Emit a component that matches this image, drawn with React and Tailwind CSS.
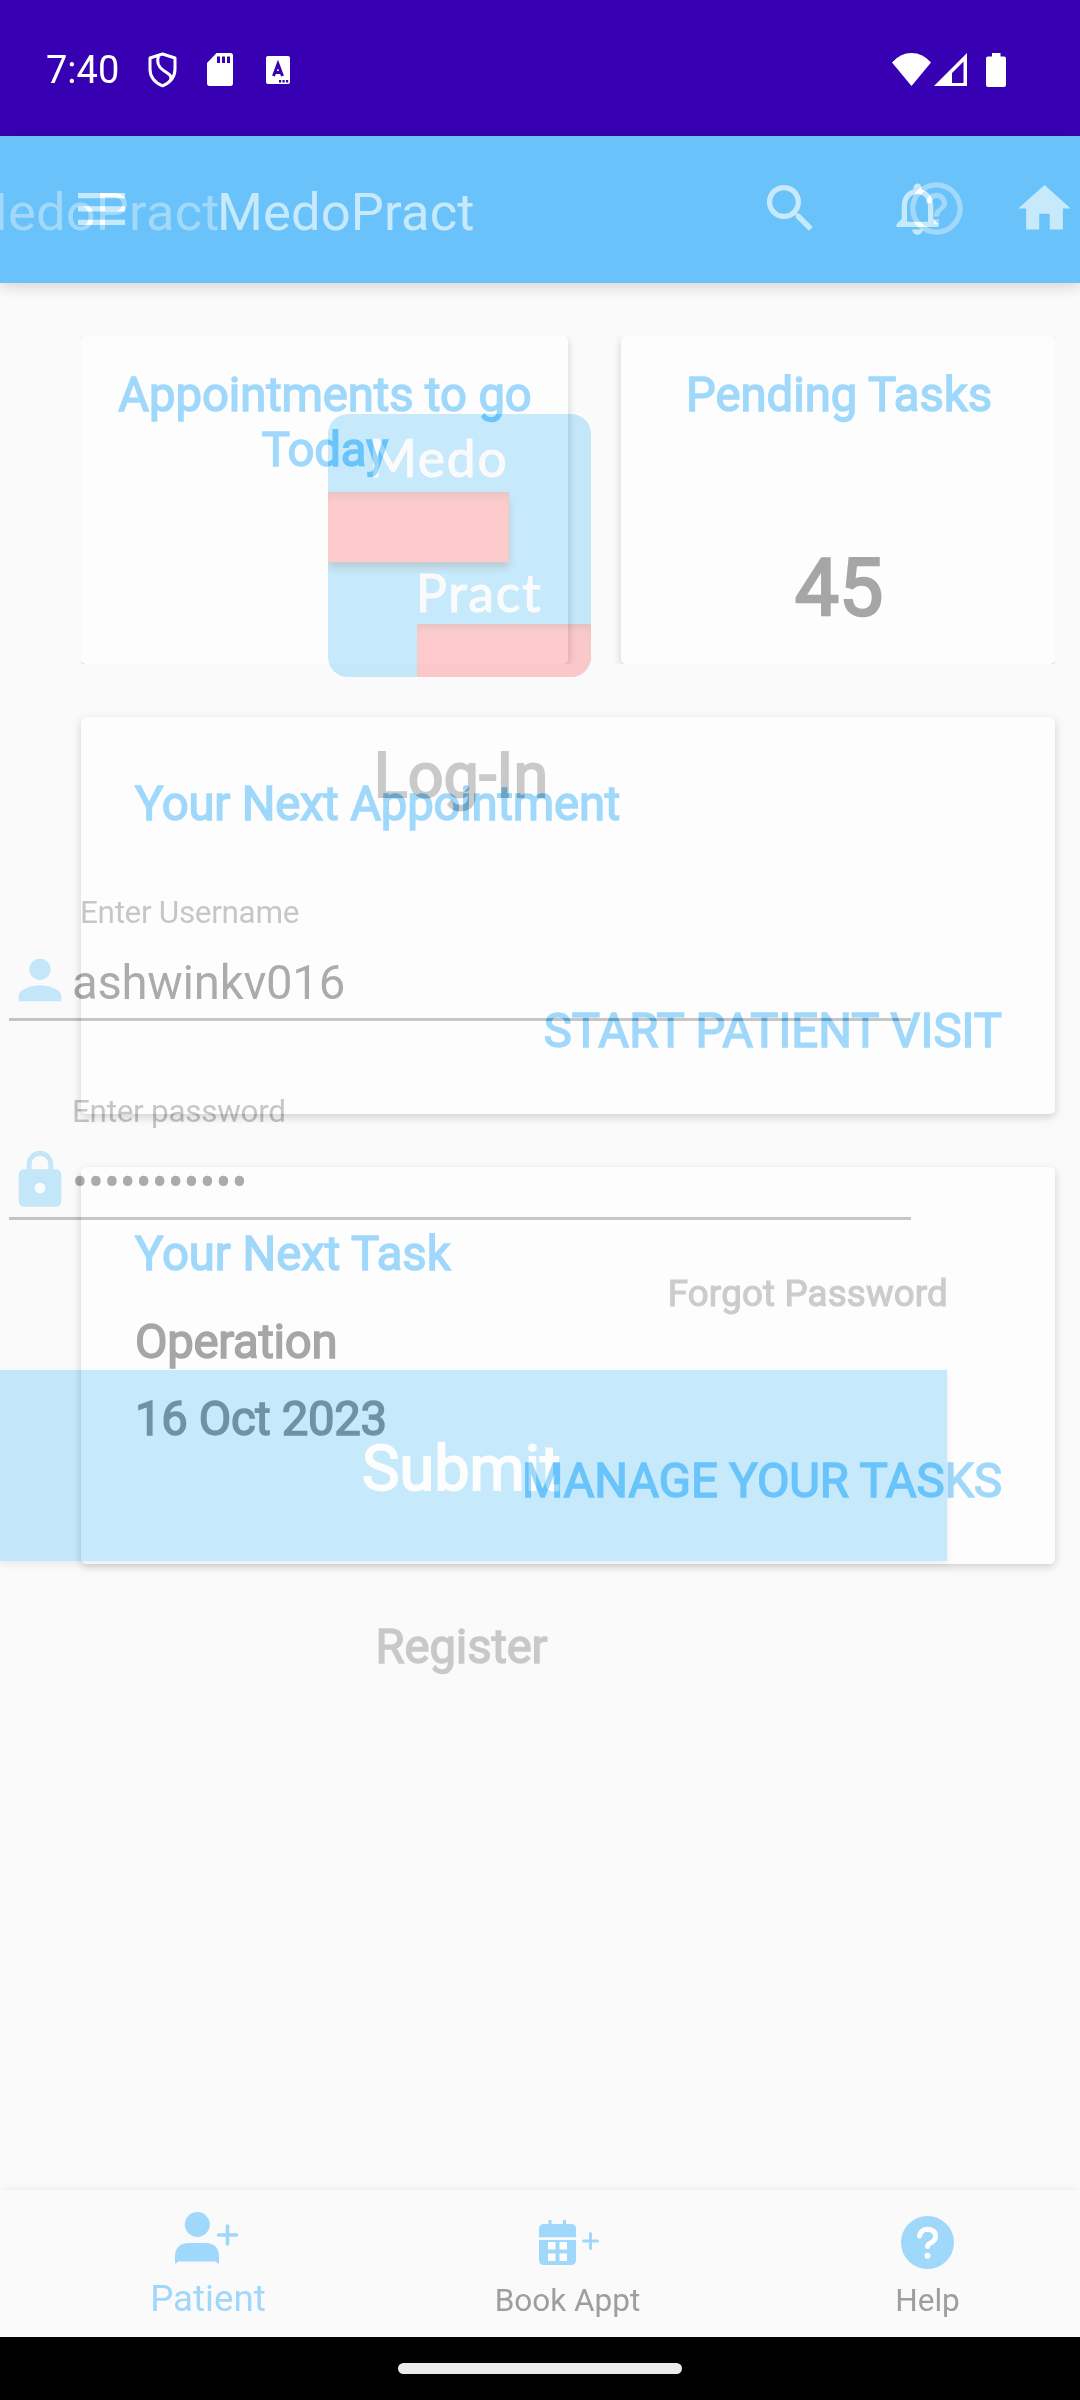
import React from "react";
import {
  MdSearch,
  MdNotificationsNone,
  MdHome,
  MdHelpOutline,
  MdPerson,
  MdLock,
} from "react-icons/md";

function StatusBar() {
  return (
    <div className="flex h-[136px] shrink-0 items-center bg-[#3700b3] pl-[46px] pt-[3px] text-white">
      <span className="w-[102px] text-[38px] leading-[44px]">7:40</span>
      <svg className="h-[36px] w-[30px]" viewBox="0 0 30 36" fill="none" stroke="#fff">
        <path d="M14.500 2 L27 6 V17 C27 24.500 22.500 30.500 14.500 33.800 C6.500 30.500 2 24.500 2 17 V6 Z" strokeWidth="3" strokeLinejoin="round" />
        <path d="M10.500 4 C8 11 10.500 15 15.500 18.500 C22 22.500 24 24 22.500 28" strokeWidth="3" />
      </svg>
      <svg className="ml-[29px] h-[33px] w-[26px]" viewBox="0 0 26 33">
        <path d="M9.500 0 H23.500 Q26 0 26 2.500 V30 Q26 33 23.500 33 H2.500 Q0 33 0 30 V10 Z" fill="#fff" />
        <path d="M10 3.500h3v6.500h-3zM15 3.500h3v6.500h-3zM20 3.500h3v6.500h-3z" fill="#3700b3" />
      </svg>
      <svg className="ml-[33px] h-[28px] w-[24px]" viewBox="0 0 24 28">
        <rect width="24" height="28" rx="2" fill="#fff" />
        <path d="M7.500 20 L12 8 L16.500 20 M9 16.500 H15" stroke="#3700b3" strokeWidth="3" fill="none" />
        <path d="M13 24h2.200v2.500h-2.200zM16.500 24h2.200v2.500h-2.200zM20 24h2.200v2.500h-2.200z" fill="#3700b3" />
      </svg>
      <svg className="ml-auto h-[33px] w-[39px]" viewBox="0 0 39 33">
        <path d="M0 9.500 Q8 0 19.500 0 Q31 0 39 9.500 L19.500 33 Z" fill="#fff" />
      </svg>
      <svg className="ml-[3px] h-[33px] w-[33px]" viewBox="0 0 33 33">
        <path fillRule="evenodd" d="M0 33 L33 0 V33 Z M18 20 V30 H29.500 V8.500 Z" fill="#fff" />
      </svg>
      <svg className="ml-[19px] mr-[74px] h-[34px] w-[20px]" viewBox="0 0 20 34">
        <path d="M6 0h8.500v3.500H18q2 0 2 2V32q0 2-2 2H2q-2 0-2-2V5.500q0-2 2-2h4z" fill="#fff" />
      </svg>
    </div>
  );
}

function AppBar() {
  return (
    <header className="flex h-[147px] shrink-0 items-center bg-[#69c3fa] pl-[78px] text-[#c6e9fc] shadow-[0_3px_14px_rgba(0,0,0,0.16)]">
      <svg className="-mt-[2px] h-[32px] w-[47px]" viewBox="0 0 47 32">
        <path d="M0 0h47v5.300H0zM0 13.300h47v5.300H0zM0 26.700h47v5.300H0z" fill="currentColor" />
      </svg>
      <h1 className="ml-[92px] mt-[5px] text-[52.5px] leading-[62px] tracking-[0.15px]">MedoPract</h1>
      <div className="-mt-[2px] ml-auto mr-[4px] flex gap-[64px]">
        <MdSearch size={63} />
        <MdNotificationsNone size={63} />
        <MdHome size={63} />
      </div>
    </header>
  );
}

const shadow = "shadow-[0_3px_8px_rgba(0,0,0,0.17)]";
const bold = "text-[47.25px] leading-[55px] [-webkit-text-stroke:1.5px_currentColor]";

function Dashboard() {
  return (
    <main className="ml-[28px] w-[1080px] flex-1 px-[53px] pt-[53px] text-[#9fd8fb]">
      <section className="flex h-[328px] gap-[53px] overflow-hidden">
        <div className={`w-[487px] rounded-[5px] bg-[#fdfdfd] px-[20px] pt-[32px] text-center ${shadow}`}>
          <h2 className={`pl-[1px] tracking-[-0.1px] ${bold}`}>Appointments to go Today</h2>
        </div>
        <div className={`w-[434px] rounded-[5px] bg-[#fdfdfd] pt-[32px] text-center ${shadow}`}>
          <h2 className={`pl-[2px] ${bold}`}>Pending Tasks</h2>
          <p className="mt-[119px] pl-[2px] text-[78.75px] leading-[92px] text-[#a6a6a6] [-webkit-text-stroke:2.5px_currentColor]">45</p>
        </div>
      </section>
      <section className={`mt-[53px] flex h-[397px] flex-col rounded-[5px] bg-[#fdfdfd] px-[53px] pt-[60px] ${shadow}`}>
        <h2 className={`pl-[1px] tracking-[-0.18px] ${bold}`}>Your Next Appointment</h2>
        <button className={`mt-[172px] self-end tracking-[0.05px] ${bold}`}>START PATIENT VISIT</button>
      </section>
      <section className={`mt-[53px] flex h-[397px] flex-col rounded-[5px] bg-[#fdfdfd] px-[53px] pt-[60px] ${shadow}`}>
        <h2 className={`pl-[1px] ${bold}`}>Your Next Task</h2>
        <p className={`mt-[33px] pl-[1px] tracking-[-0.3px] text-[#a6a6a6] ${bold}`}>Operation</p>
        <p className={`mt-[22px] pl-[1px] tracking-[-0.35px] text-[#a6a6a6] ${bold}`}>16 Oct 2023</p>
        <button className={`mt-[7px] self-end tracking-[-0.1px] ${bold}`}>MANAGE YOUR TASKS</button>
      </section>
    </main>
  );
}

function BottomNav() {
  return (
    <nav className="grid h-[147px] w-[1080px] shrink-0 grid-cols-[360px_360px_360px] bg-[#fafafa] pl-[28px] text-[31.5px] leading-[37px] text-[#9e9e9e] shadow-[0_-1px_8px_rgba(0,0,0,0.06)]">
      <div className="flex flex-col items-center pt-[22px] text-[#9fd8fb]">
        <svg className="-ml-[2px] h-[52px] w-[64px]" viewBox="0 0 64 52" fill="currentColor">
          <circle cx="22.300" cy="12.500" r="12.500" />
          <path d="M0 51 V45 Q0 31 14 31 H30 Q44 31 44 45 V51 Q43 52.500 41 49.500 H3 Q1 52.500 0 51Z" />
          <path d="M52.500 14v18M43.500 23h18" stroke="currentColor" strokeWidth="3.600" strokeLinecap="round" />
        </svg>
        <span className="mt-[13px] text-[36.75px] leading-[43px]">Patient</span>
      </div>
      <div className="flex flex-col items-center pt-[30px]">
        <svg className="ml-[2px] h-[45px] w-[60px]" viewBox="0 0 60 45">
          <path d="M9.500 0h3v4h11.500V0h3v4h5q5 0 5 5v8.200H0V9q0-5 5-5h4.500z" fill="#9fd8fb" />
          <path d="M0 20h37v20q0 5-5 5H5q-5 0-5-5z" fill="#9fd8fb" />
          <path d="M9 22h7.500v7.500H9zM20.500 22H28v7.500h-7.500zM9 33.500h7.500V41H9zM20.500 33.500H28V41h-7.500z" fill="#fdfdfd" />
          <path d="M51.500 13.500v15M44.500 21h14" stroke="#9fd8fb" strokeWidth="3" strokeLinecap="round" />
        </svg>
        <span className="-ml-[1px] mt-[17px]">Book Appt</span>
      </div>
      <div className="flex flex-col items-center pt-[26px]">
        <svg className="-ml-[1px] h-[53px] w-[53px]" viewBox="0 0 53 53">
          <circle cx="26.500" cy="26.500" r="26.500" fill="#9fd8fb" />
          <path d="M18.500 20 Q20 13.300 26.500 13.300 Q35 14 34.500 21 Q34 25 29.500 27 Q26.500 28.500 26.500 30.500" fill="none" stroke="#fdfdfd" strokeWidth="5" strokeLinecap="round" />
          <circle cx="26.500" cy="39.800" r="3" fill="#fdfdfd" />
        </svg>
        <span className="-ml-[1px] mt-[13px]">Help</span>
      </div>
    </nav>
  );
}

function Logo() {
  return (
    <div className="h-[263px] w-[263px] overflow-hidden rounded-[20px] bg-[#371401] font-['Lato'] text-[51.5px] leading-[58px] tracking-[1.8px] text-[#030303] mix-blend-difference [-webkit-text-stroke:1.2px_#030303]">
      <p className="h-[78px] pl-[41px] pt-[14px]">Medo</p>
      <div className="h-[70px] w-[181px] bg-[#003232] shadow-[0_6px_8px_#44322a,inset_0_8px_8px_-4px_#183c3c]" />
      <p className="h-[62px] pl-[88px] pt-[1px]">Pract</p>
      <div className="ml-[89px] h-[53px] w-[174px] bg-[#003232] shadow-[inset_0_8px_8px_-4px_#183c3c]" />
    </div>
  );
}

function LoginLayer() {
  return (
    <div className="absolute left-0 top-[136px] flex w-[1080px] flex-col">
      <div className="flex h-[147px] items-center text-[#391601]">
        <span className="-ml-[38px] mt-[5px] text-[52.5px] leading-[62px] tracking-[0.15px] mix-blend-plus-lighter">MedoPract</span>
        <MdHelpOutline size={63} className="-mt-[2px] ml-auto mr-[112px] mix-blend-plus-lighter" />
      </div>
      <div className="flex w-[920px] flex-col text-[#343434]">
        <div className="ml-[328px] mt-[131px] flex mix-blend-difference">
          <Logo />
        </div>
        <h2 className="mt-[62px] pl-[2px] text-center text-[63px] leading-[74px] mix-blend-difference [-webkit-text-stroke:2px_currentColor]">Log-In</h2>
        <label className="ml-[80px] mt-[81px] text-[31.5px] leading-[37px] tracking-[-0.33px] text-[#373737] mix-blend-difference">Enter Username</label>
        <div className="mt-[17px] flex h-[64px] items-center pl-[8px] mix-blend-difference">
          <MdPerson size={64} className="text-[#371401]" />
          <span className="pt-[6px] text-[47.25px] leading-[55px] tracking-[-0.25px] text-[#525252]">ashwinkv016</span>
        </div>
        <div className="ml-[9px] mt-[6px] h-[3px] w-[902px] bg-[#373737] mix-blend-difference" />
        <label className="ml-[72px] mt-[72px] text-[31.5px] leading-[37px] tracking-[-0.3px] text-[#373737] mix-blend-difference">Enter password</label>
        <div className="mt-[17px] flex h-[64px] items-center pl-[8px] mix-blend-difference">
          <MdLock size={64} className="mt-[2px] text-[#371401]" />
          <span className="pt-[8px] text-[47.25px] leading-[55px] text-[#525252]">•••••••••••</span>
        </div>
        <div className="ml-[9px] mt-[6px] h-[3px] w-[902px] bg-[#373737] mix-blend-difference" />
        <p className="-mr-[28px] mt-[52px] text-right text-[36.75px] leading-[43px] tracking-[0.15px] text-[#323232] mix-blend-difference [-webkit-text-stroke:1.2px_currentColor]">Forgot Password</p>
        <button className="mt-[55px] h-[191px] w-[947px] bg-[#371401] pl-[362px] pt-[6px] text-left text-[63px] leading-[74px] text-black shadow-[0_3px_8px_rgba(255,255,255,0.07)] mix-blend-difference [-webkit-text-stroke:2px_currentColor]">Submit</button>
        <p className="mt-[59px] pl-[3px] text-center text-[47.25px] leading-[55px] tracking-[-0.15px] text-[#323232] mix-blend-difference [-webkit-text-stroke:1.5px_currentColor]">Register</p>
      </div>
    </div>
  );
}

export default function App() {
  return (
    <div className="relative isolate flex h-[2400px] w-[1080px] flex-col overflow-hidden bg-[#fafafa] font-['Roboto',sans-serif] font-normal">
      <StatusBar />
      <AppBar />
      <Dashboard />
      <BottomNav />
      <div className="flex h-[63px] shrink-0 items-center justify-center bg-black">
        <div className="h-[11px] w-[284px] rounded-full bg-[#ebebeb]" />
      </div>
      <LoginLayer />
    </div>
  );
}
